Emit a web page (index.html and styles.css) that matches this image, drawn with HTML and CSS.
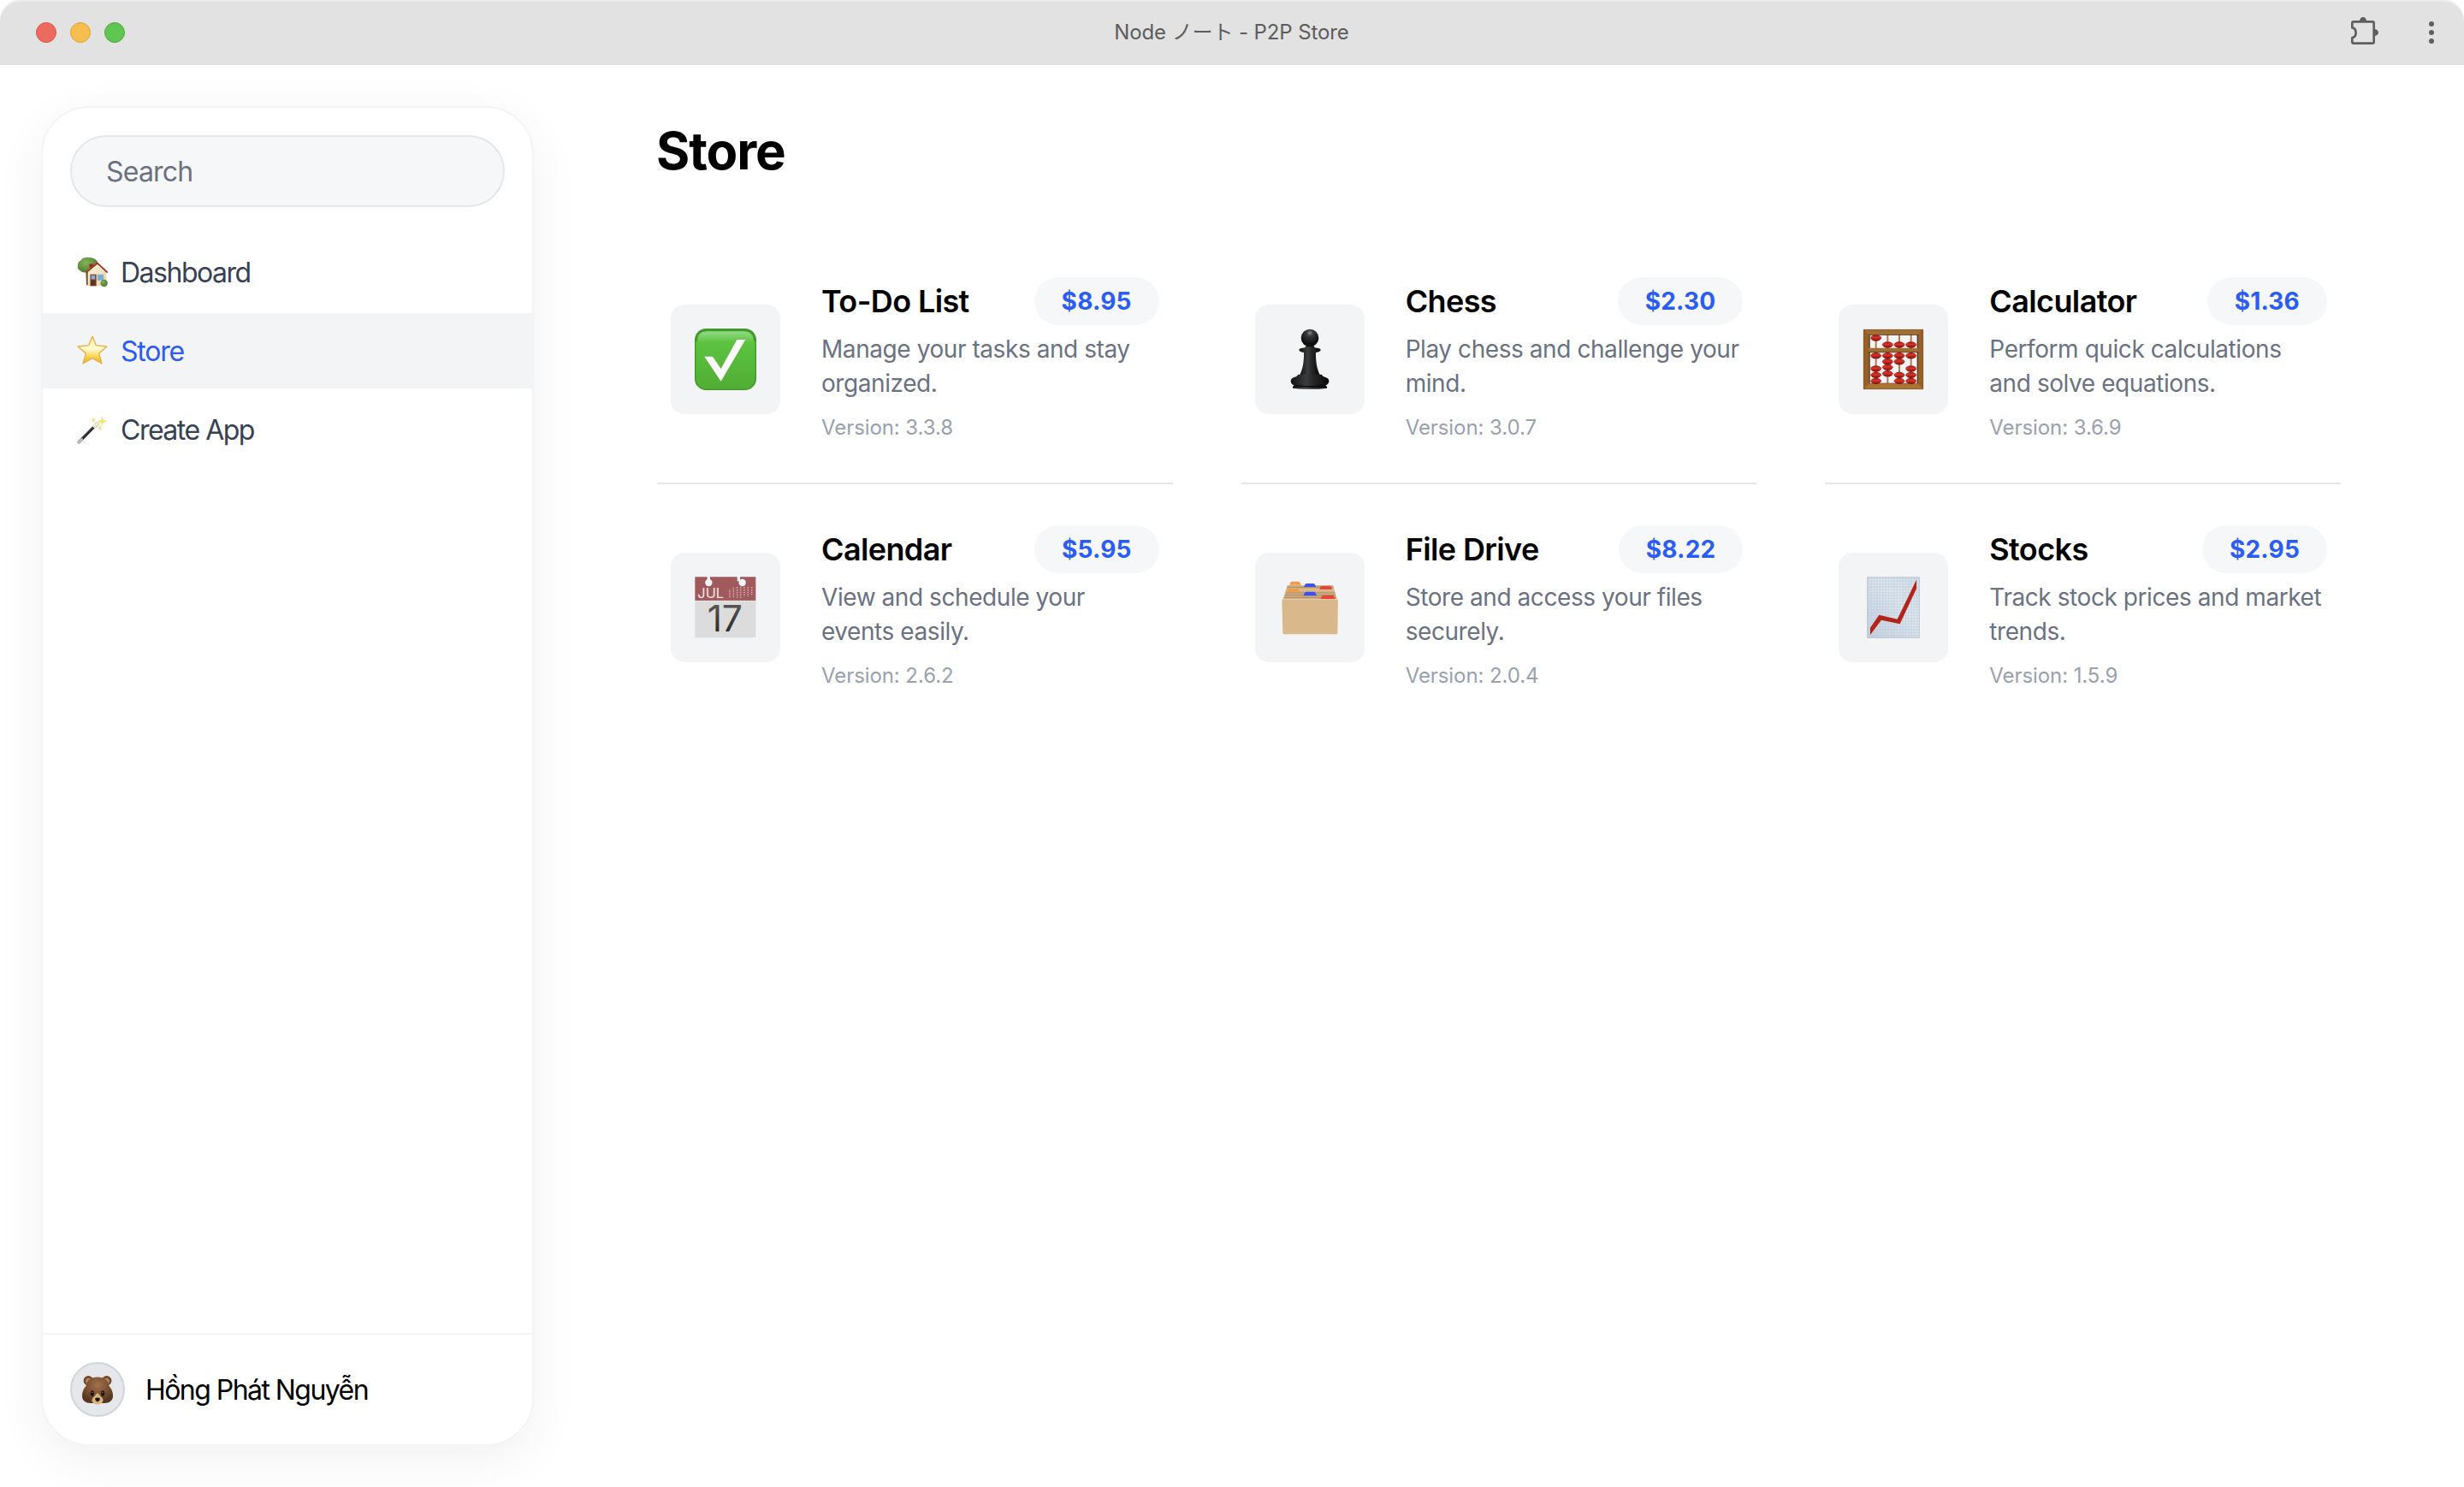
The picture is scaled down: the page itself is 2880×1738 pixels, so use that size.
FILE: index.html
```html
<!DOCTYPE html>
<html lang="en">
<head>
<meta charset="utf-8">
<title>Node ノート - P2P Store</title>
<link rel="stylesheet" href="styles.css">
</head>
<body>
<div class="window">
  <header class="titlebar">
    <div class="lights">
      <span class="light light-close"></span>
      <span class="light light-minimize"></span>
      <span class="light light-zoom"></span>
    </div>
    <div class="window-title">Node ノート - P2P Store</div>
    <div class="window-actions">
      <svg class="puzzle" viewBox="144 60 96 96">
        <path d="M153 76H219Q224 76 224 81V147Q224 152 219 152H153Q148 152 148 147V132C165 130 165 99 148 97V81Q148 76 153 76Z" fill="none" stroke="#5f5f5f" stroke-width="8" stroke-linejoin="round"/>
        <path d="M174 74A12 14 0 0 1 198 74ZM226 102A14 12 0 0 1 226 126Z" fill="#5f5f5f"/>
      </svg>
      <svg class="kebab" viewBox="0 0 6 26">
        <circle cx="3" cy="3" r="3"/><circle cx="3" cy="13" r="3"/><circle cx="3" cy="23" r="3"/>
      </svg>
    </div>
  </header>

  <div class="app">
    <aside class="sidebar">
      <div class="search-wrap"><input class="search" type="text" placeholder="Search"></div>
      <nav class="nav">
        <a class="nav-item">
          <svg class="nav-icon" viewBox="60 58 108 108">
            <defs>
              <radialGradient id="leaf" cx=".4" cy=".35" r=".7"><stop offset="0" stop-color="#86b45a"/><stop offset="1" stop-color="#497a2c"/></radialGradient>
              <linearGradient id="wall" x1="0" x2="1" y1="0" y2="1"><stop offset="0" stop-color="#fdf3d8"/><stop offset="1" stop-color="#e6d2ac"/></linearGradient>
            </defs>
            <path d="M91 108H99V158H93Z" fill="#6a4b2c"/>
            <path d="M63 88C62 80 66 74 72 72C77 63 91 59 101 61C115 61 128 67 132 76C137 82 134 92 128 98C118 108 104 112 96 111C90 116 77 114 71 107C63 104 61 95 63 88Z" fill="url(#leaf)"/>
            <path d="M103 84H117V96H103Z" fill="#9c2a20"/>
            <path d="M98 112L131 84L163 114V161H98Z" fill="url(#wall)"/>
            <path d="M93 112L131 80L167 114" fill="none" stroke="#8d241f" stroke-width="5"/>
            <path d="M94 110L131 78L166 111" fill="none" stroke="#d44a40" stroke-width="3"/>
            <path d="M106 120H128V161H106Z" fill="#7e4a33"/>
            <path d="M110 124H123V137H110Z" fill="#7fb4e2"/>
            <path d="M109 141H125V158H109Z" fill="#5f3324"/>
            <path d="M132 121H153V141H132Z" fill="#74aede" stroke="#b7b7a8" stroke-width="2"/>
            <circle cx="155" cy="151" r="12.500" fill="#5b8c3a"/><circle cx="152" cy="147" r="6" fill="#7aa953"/>
          </svg>
          <span>Dashboard</span>
        </a>
        <a class="nav-item nav-item-active">
          <svg class="nav-icon" viewBox="60 336 108 108">
            <defs><linearGradient id="star" x1="0" x2="0" y1="0" y2="1"><stop offset="0" stop-color="#fff6b0"/><stop offset=".45" stop-color="#fffbd0"/><stop offset=".75" stop-color="#f8d552"/><stop offset="1" stop-color="#eda92c"/></linearGradient></defs>
            <path d="M114 339L127 371L164 375L137 399L147 435L114 416L81 435L91 399L63 375L101 371Z" fill="url(#star)" stroke="#e9ae45" stroke-width="4" stroke-linejoin="round"/>
          </svg>
          <span>Store</span>
        </a>
        <a class="nav-item">
          <svg class="nav-icon" viewBox="60 612 108 108">
            <path d="M67 710L132 644" stroke="#2b2c2e" stroke-width="10" stroke-linecap="round"/>
            <path d="M70 702L126 645" stroke="#77797c" stroke-width="2"/>
            <path d="M66 711L76 701" stroke="#b9bbbe" stroke-width="10" stroke-linecap="round"/>
            <path d="M121 655L135 642" stroke="#f3e9cf" stroke-width="11" stroke-linecap="round"/>
            <path d="M126 660L140 645" stroke="#a9a28d" stroke-width="2"/>
            <path d="M149 620L152 633L165 637L152 641L149 655L145 641L132 637L145 633ZM118 625L120 631L126 633L120 636L118 643L115 636L110 633L115 631ZM141 651L143 658L149 660L143 662L141 669L138 662L133 660L138 658Z" fill="#f6e46e" stroke="#eadb8a" stroke-width="1"/>
          </svg>
          <span>Create App</span>
        </a>
      </nav>
      <div class="profile">
        <div class="avatar">
          <svg class="avatar-icon" viewBox="0 0 36 36">
            <defs><radialGradient id="fur" cx=".5" cy=".3" r=".65"><stop offset="0" stop-color="#a2714f"/><stop offset=".55" stop-color="#7d5231"/><stop offset="1" stop-color="#56361d"/></radialGradient></defs>
            <circle cx="7.300" cy="7.800" r="5.700" fill="#6f4729"/><circle cx="28.700" cy="7.800" r="5.700" fill="#6f4729"/>
            <circle cx="7.600" cy="8.300" r="3.500" fill="#b98569"/><circle cx="28.400" cy="8.300" r="3.500" fill="#b98569"/>
            <path d="M18 3.500C26 3.500 30.500 7 31.500 14C34.500 17 36 21 36 25.500C36 31 32 34 26 34H10C4 34 0 31 0 25.500C0 21 1.500 17 4.500 14C5.500 7 10 3.500 18 3.500Z" fill="url(#fur)"/>
            <path d="M18 22.500C20 22.500 20 25 22 26.500C27 30 24 35.500 18 35.500S9 30 14 26.500C16 25 16 22.500 18 22.500Z" fill="#dcb47c"/>
            <ellipse cx="11.800" cy="22.500" rx="2" ry="3.200" fill="#17120f"/><ellipse cx="24.200" cy="22.500" rx="2" ry="3.200" fill="#17120f"/>
            <circle cx="11.500" cy="21.500" r=".7" fill="#858c96"/><circle cx="23.900" cy="21.500" r=".7" fill="#858c96"/>
            <path d="M15 28.500Q18 26.500 21 28.500Q21 31 18 32.500Q15 31 15 28.500Z" fill="#15161a"/>
          </svg>
        </div>
        <span class="profile-name">Hồng Phát Nguyễn</span>
      </div>
    </aside>

    <main class="main">
      <h1 class="page-title">Store</h1>
      <div class="grid">
        <article class="item">
          <div class="tile">
            <svg class="tile-icon" viewBox="42 48 384 384">
              <defs>
                <linearGradient id="green" x1="0" x2="0" y1="0" y2="1"><stop offset="0" stop-color="#9fdf94"/><stop offset=".22" stop-color="#5cc340"/><stop offset="1" stop-color="#50ad33"/></linearGradient>
              </defs>
              <rect x="128" y="134" width="212" height="212" rx="38" fill="url(#green)" stroke="#3f9529" stroke-width="4"/>
              <path d="M132 176V170Q134 139 168 138H300Q334 140 336 170V176" fill="none" stroke="#429a2c" stroke-width="7"/>
              <path d="M160 230L189 230L218 273L274 171H304L218 317Z" fill="#fff"/>
            </svg>
          </div>
          <div class="info">
            <div class="row"><h2 class="name">To-Do List</h2><span class="price">$8.95</span></div>
            <p class="desc">Manage your tasks and stay organized.</p>
            <p class="version">Version: 3.3.8</p>
          </div>
        </article>

        <article class="item">
          <div class="tile">
            <svg class="tile-icon" viewBox="51 48 384 384">
              <defs>
                <linearGradient id="pawn" x1="0" x2="1" y1="0" y2="0"><stop offset="0" stop-color="#111"/><stop offset=".4" stop-color="#3c3c3c"/><stop offset=".6" stop-color="#262626"/><stop offset="1" stop-color="#080808"/></linearGradient>
                <radialGradient id="ball" cx=".5" cy=".22" r=".6"><stop offset="0" stop-color="#8a8a8a"/><stop offset=".3" stop-color="#3a3a3a"/><stop offset="1" stop-color="#101010"/></radialGradient>
              </defs>
              <path d="M222 212H264C263 250 268 275 279 296H207C218 275 223 250 222 212Z" fill="url(#pawn)"/>
              <path d="M231 188H255L260 199Q281 201 281 207Q279 215 262 216H224Q207 215 205 207Q205 201 226 199Z" fill="url(#pawn)"/>
              <circle cx="243" cy="165" r="31" fill="url(#ball)"/>
              <path d="M202 293H284Q288 301 300 304Q311 309 310 318Q308 328 298 331Q305 336 303 341Q243 348 183 341Q181 336 188 331Q178 328 176 318Q175 309 186 304Q198 301 202 293Z" fill="url(#pawn)"/>
              <path d="M188 332Q243 339 298 332" fill="none" stroke="#000" stroke-width="3"/>
            </svg>
          </div>
          <div class="info">
            <div class="row"><h2 class="name">Chess</h2><span class="price">$2.30</span></div>
            <p class="desc">Play chess and challenge your mind.</p>
            <p class="version">Version: 3.0.7</p>
          </div>
        </article>

        <article class="item">
          <div class="tile">
            <svg class="tile-icon" viewBox="27 48 384 384">
              <defs>
                <linearGradient id="bead" x1="0" x2="0" y1="0" y2="1"><stop offset="0" stop-color="#8e1813"/><stop offset=".4" stop-color="#dc3429"/><stop offset="1" stop-color="#720d0b"/></linearGradient>
                <path id="b" d="M-20 0C-16 -7 -10 -11 0 -11S16 -7 20 0C16 7 10 11 0 11S-16 7 -20 0Z" fill="url(#bead)"/>
              </defs>
              <path d="M158 150V325M199 150V325M240 150V325M281 150V325" stroke="#b87952" stroke-width="6"/>
              <path d="M134 152H305V326H134Z" fill="none" stroke="#35220f" stroke-width="6"/>
              <path d="M114 135H324V345H114ZM134 153V325H305V153Z" fill="#966129" fill-rule="evenodd"/>
              <path d="M114 135L134 153H305L324 135ZM131 200H307V214H131Z" fill="#a06d33"/>
              <path d="M131 215H307" stroke="#573512" stroke-width="3"/>
              <path d="M114 345L134 325H305L324 345Z" fill="#aa7434"/>
              <path d="M115 136H323V344H115Z" fill="none" stroke="#7d5223" stroke-width="2"/>
              <use href="#b" x="158" y="165"/><use href="#b" x="199" y="189"/><use href="#b" x="240" y="189"/><use href="#b" x="281" y="189"/>
              <use href="#b" x="158" y="227"/><use href="#b" x="158" y="273"/><use href="#b" x="158" y="295"/><use href="#b" x="158" y="316"/>
              <use href="#b" x="199" y="227"/><use href="#b" x="199" y="248"/><use href="#b" x="199" y="268"/><use href="#b" x="199" y="290"/>
              <use href="#b" x="240" y="227"/><use href="#b" x="240" y="248"/><use href="#b" x="240" y="295"/><use href="#b" x="240" y="316"/>
              <use href="#b" x="281" y="227"/><use href="#b" x="281" y="273"/><use href="#b" x="281" y="295"/><use href="#b" x="281" y="316"/>
            </svg>
          </div>
          <div class="info">
            <div class="row"><h2 class="name">Calculator</h2><span class="price">$1.36</span></div>
            <p class="desc">Perform quick calculations and solve equations.</p>
            <p class="version">Version: 3.6.9</p>
          </div>
        </article>

        <article class="item item-last">
          <div class="tile">
            <svg class="tile-icon" viewBox="42 48 384 384">
              <defs><linearGradient id="ink" x1="0" x2="0" y1="0" y2="1"><stop offset=".2" stop-color="#555"/><stop offset=".9" stop-color="#222"/></linearGradient></defs>
              <path d="M127 216H340V346H127Z" fill="#dcdcdc"/>
              <path d="M127 133H340V216H127Z" fill="#a05a5c"/>
              <path d="M127 217H340" stroke="#efeaea" stroke-width="2"/>
              <circle cx="175" cy="153" r="12.500" fill="#f6f7f8"/><circle cx="293" cy="153" r="12.500" fill="#f6f7f8"/>
              <path d="M170 132H180V145H170ZM275 132H285V148H275Z" fill="#f3f4f6"/>
              <path d="M249 178V206M262 170V206M275 168V206M287 168V206M300 168V200M313 168V200M326 168V198" stroke="#d9b5b6" stroke-width="5" stroke-dasharray="3 3"/>
              <text class="cal-month" x="136" y="206">JUL</text>
              <text class="cal-day" x="170" y="325" fill="url(#ink)">17</text>
            </svg>
          </div>
          <div class="info">
            <div class="row"><h2 class="name">Calendar</h2><span class="price">$5.95</span></div>
            <p class="desc">View and schedule your events easily.</p>
            <p class="version">Version: 2.6.2</p>
          </div>
        </article>

        <article class="item item-last">
          <div class="tile">
            <svg class="tile-icon" viewBox="51 48 384 384">
              <path d="M164 162H324L339 214H148Z" fill="#d2b285"/>
              <path d="M163 169H325M160 189H331M156 197H333M153 205H336" stroke="#a98a60" stroke-width="3"/>
              <path d="M160 179H328" stroke="#e3c79c" stroke-width="3"/>
              <path d="M172 161L176 151Q177 149 181 149H203Q207 149 208 152L212 161Z" fill="#ee9b4b"/>
              <path d="M222 168L227 158Q228 156 232 156H255Q259 156 260 159L265 168Z" fill="#4050ee"/>
              <path d="M276 177L281 167Q282 165 286 165H313Q317 165 318 168L321 177Z" fill="#e8453f"/>
              <path d="M162 187L167 176Q168 174 172 174H199Q203 174 205 177L210 187Z" fill="#ee9b4b"/>
              <path d="M220 199L226 187Q227 185 231 185H257Q261 185 262 188L268 199Z" fill="#4050ee"/>
              <path d="M280 210L286 199Q287 197 291 197H322Q326 197 327 200L331 210Z" fill="#e8453f"/>
              <path d="M149 210H337Q342 210 342 215L340 329Q340 334 335 334H153Q148 334 148 329L145 215Q145 210 149 210Z" fill="#d9b98c"/>
              <path d="M147 212H340" stroke="#e6cda6" stroke-width="3"/>
            </svg>
          </div>
          <div class="info">
            <div class="row"><h2 class="name">File Drive</h2><span class="price">$8.22</span></div>
            <p class="desc">Store and access your files securely.</p>
            <p class="version">Version: 2.0.4</p>
          </div>
        </article>

        <article class="item item-last">
          <div class="tile">
            <svg class="tile-icon" viewBox="27 48 384 384">
              <defs>
                <linearGradient id="paper" x1="0" x2="1" y1="1" y2="0"><stop offset="0" stop-color="#c9cfd6"/><stop offset=".6" stop-color="#e6e9ec"/><stop offset="1" stop-color="#d9dfe4"/></linearGradient>
                <pattern id="lines" x="127" y="133" width="10" height="10" patternUnits="userSpaceOnUse"><path d="M0 5H10M5 0V10" stroke="#b4cce4" stroke-width="2"/></pattern>
              </defs>
              <path d="M127 133H311V347H127Z" fill="url(#paper)"/>
              <path d="M127 133H311V347H127Z" fill="url(#lines)"/>
              <path d="M128 134H310V346H128Z" fill="none" stroke="#b9c0c6" stroke-width="2"/>
              <path d="M138 311L169 266L233 281L300 143V174L242 298L177 284L138 336Z" fill="#b3231a"/>
            </svg>
          </div>
          <div class="info">
            <div class="row"><h2 class="name">Stocks</h2><span class="price">$2.95</span></div>
            <p class="desc">Track stock prices and market trends.</p>
            <p class="version">Version: 1.5.9</p>
          </div>
        </article>
      </div>
    </main>
  </div>
</div>
</body>
</html>
```
FILE: styles.css
```css
* {
  box-sizing: border-box;
  margin: 0;
  padding: 0;
}

body {
  background: #fff;
  color: #000;
  font-family: Inter, "Noto Sans CJK JP", sans-serif;
}

svg {
  display: block;
  flex: none;
}

.window {
  display: flex;
  flex-direction: column;
  height: 1738px;
  overflow: hidden;
}

/* Title bar */
.titlebar {
  display: grid;
  grid-template-columns: 1fr auto 1fr;
  align-items: center;
  flex: none;
  height: 76px;
  padding: 0 35px 0 42px;
  background: #e2e2e2;
  border-radius: 24px 24px 0 0;
  box-shadow: inset 0 2px 0 #ececec;
}

.lights {
  display: flex;
  gap: 16px;
}

.light {
  width: 24px;
  height: 24px;
  border: 1px solid;
  border-radius: 50%;
}

.light-close {
  background: #ed6a5e;
  border-color: #d5574b;
}

.light-minimize {
  background: #f5bf4f;
  border-color: #d9a33c;
}

.light-zoom {
  background: #61c554;
  border-color: #4ea73f;
}

.window-title {
  color: #5c5c5c;
  font-size: 24px;
  line-height: 36px;
  letter-spacing: -0.1px;
  transform: translateX(-4px);
}

.window-actions {
  display: flex;
  align-items: center;
  justify-content: flex-end;
  gap: 59px;
}

.puzzle {
  width: 32px;
  height: 32px;
  margin-bottom: 4px;
}

.kebab {
  width: 6px;
  height: 26px;
  fill: #5f5f5f;
}

/* Sidebar */
.app {
  display: flex;
  flex: 1;
  min-height: 0;
  padding: 48px 144px 48px 48px;
}

.sidebar {
  display: flex;
  flex-direction: column;
  flex: none;
  width: 576px;
  background: #fff;
  border: 2px solid #f3f4f6;
  border-radius: 56px;
  box-shadow: 0 16px 60px rgba(0, 0, 0, 0.06);
}

.search-wrap {
  padding: 32px;
}

.search {
  display: block;
  width: 100%;
  height: 84px;
  padding: 0 40px;
  background: #f6f7f9;
  border: 2px solid #e5e7eb;
  border-radius: 42px;
  font: inherit;
  font-size: 32px;
  letter-spacing: -0.8px;
}

.search::placeholder {
  color: #6a7282;
  opacity: 1;
}

.nav {
  display: flex;
  flex-direction: column;
  flex: 1;
  gap: 4px;
}

.nav-item {
  display: flex;
  align-items: center;
  gap: 15px;
  height: 88px;
  padding: 0 40px;
  color: #364153;
  font-size: 32px;
  letter-spacing: -1.5px;
}

.nav-item-active {
  background: #f3f4f6;
  color: #2b5df5;
  letter-spacing: -1.25px;
}

.nav-icon {
  width: 36px;
  height: 36px;
}

.profile {
  display: flex;
  align-items: center;
  gap: 24px;
  padding: 32px;
  border-top: 2px solid #f3f4f6;
}

.avatar {
  display: grid;
  place-items: center;
  width: 64px;
  height: 64px;
  background: #e5e7eb;
  border: 2px solid #d1d5dc;
  border-radius: 50%;
}

.avatar-icon {
  width: 36px;
  height: 36px;
}

.profile-name {
  font-size: 32px;
  letter-spacing: -1.55px;
}

/* Store */
.main {
  flex: 1;
  padding: 16px 0 0 144px;
}

.page-title {
  margin: 0 0 64px -1px;
  font-size: 60px;
  font-weight: 700;
  line-height: 72px;
  letter-spacing: -1.1px;
}

.grid {
  display: grid;
  grid-template-columns: repeat(3, 1fr);
  column-gap: 80px;
}

.item {
  display: flex;
  align-items: center;
  gap: 48px;
  padding: 48px 16px;
  border-bottom: 2px solid #e5e7eb;
}

.item-last {
  border-bottom-color: transparent;
}

.tile {
  flex: none;
  width: 128px;
  height: 128px;
  background: #f3f4f6;
  border-radius: 16px;
}

.tile-icon {
  width: 128px;
  height: 128px;
}

.cal-month {
  fill: #f3e6e6;
  font-size: 49px;
}

.cal-day {
  font-size: 128px;
  font-weight: 400;
  letter-spacing: -1px;
}

.info {
  flex: 1;
  min-width: 0;
}

.row {
  display: flex;
  align-items: center;
  justify-content: space-between;
  margin-bottom: 8px;
}

.name {
  font-size: 36px;
  font-weight: 600;
  letter-spacing: -0.62px;
}

.price {
  padding: 0 32px;
  background: #f6f7f9;
  border-radius: 28px;
  color: #2b5df5;
  font-size: 28px;
  font-weight: 700;
  line-height: 56px;
  letter-spacing: 0.2px;
}

.desc {
  margin-bottom: 16px;
  color: #6a7282;
  font-size: 28px;
  line-height: 40px;
  letter-spacing: -0.43px;
}

.version {
  color: #99a1af;
  font-size: 24px;
  line-height: 32px;
  letter-spacing: -0.08px;
}
```
